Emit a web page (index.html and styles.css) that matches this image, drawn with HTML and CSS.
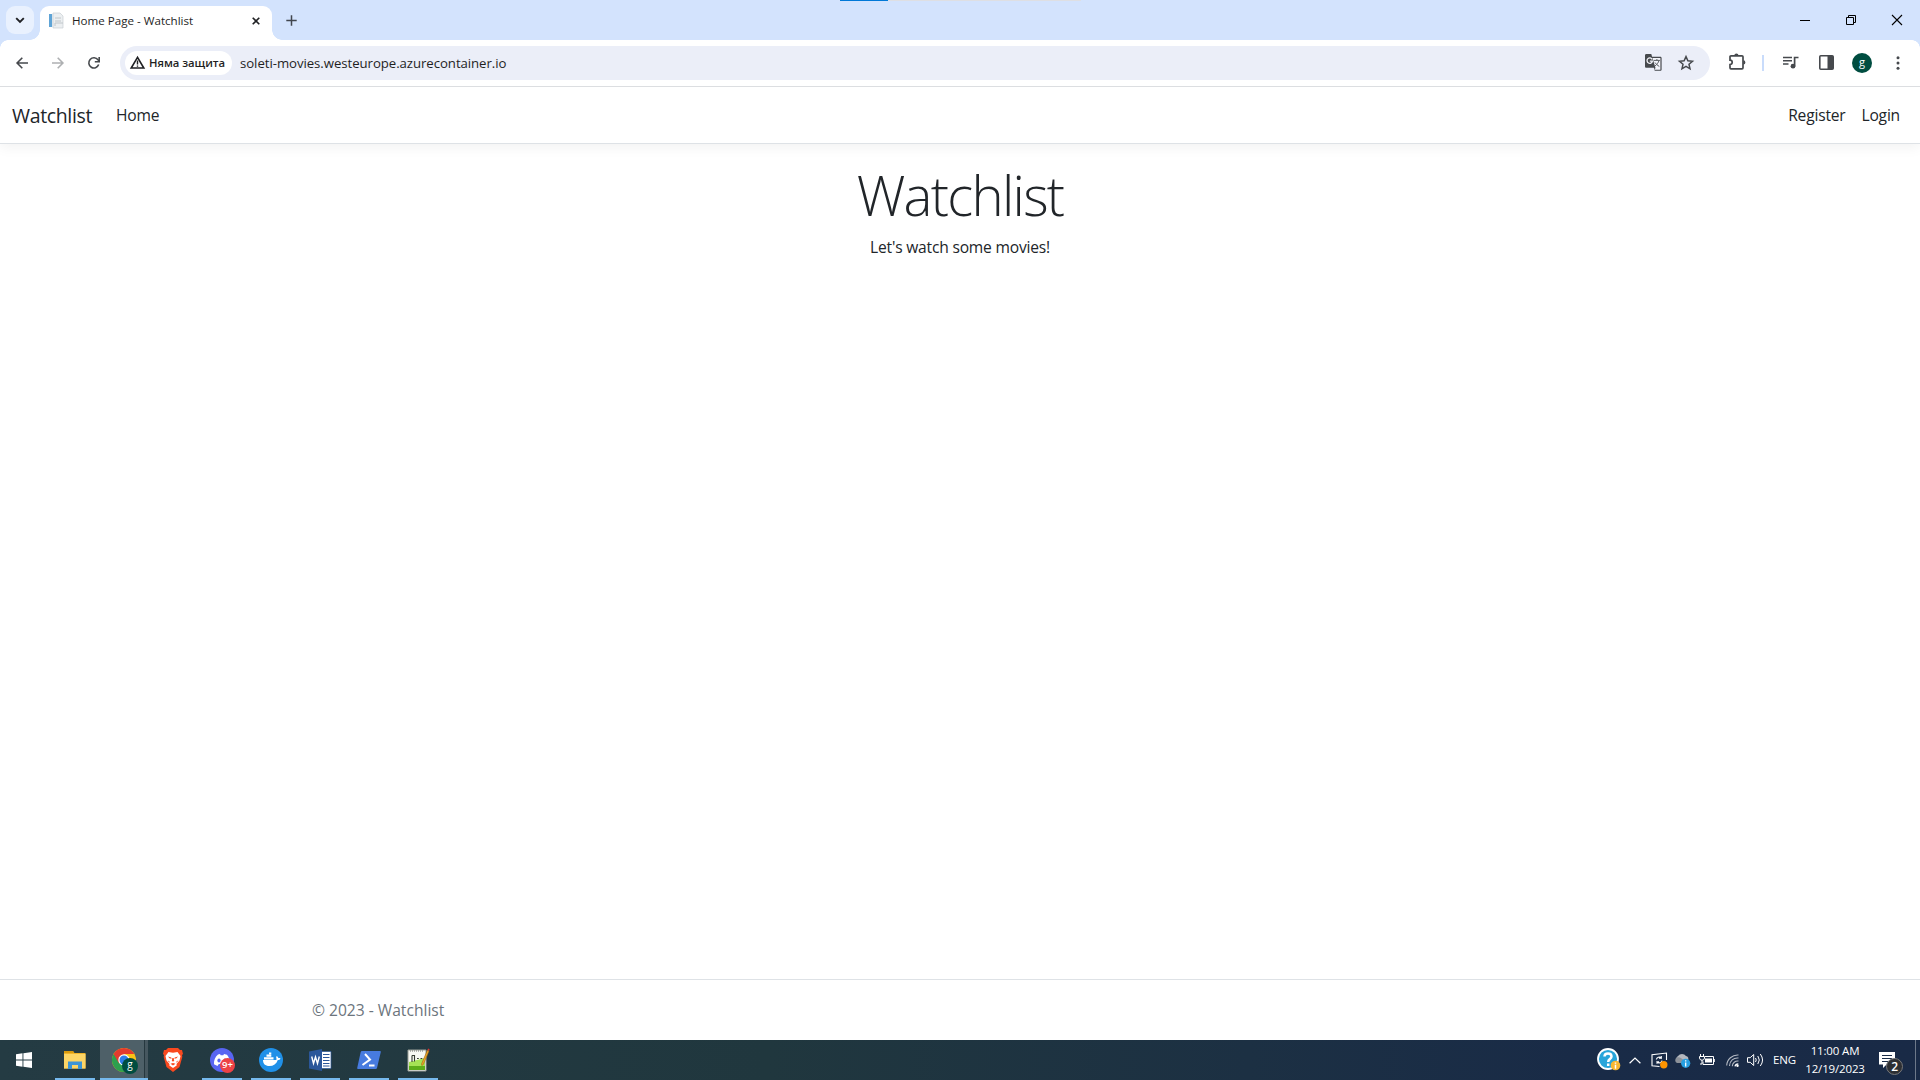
FILE: index.html
```html
<!DOCTYPE html>
<html lang="en">
<head>
<meta charset="utf-8">
<title>Home Page - Watchlist</title>
<link rel="stylesheet" href="styles.css">
</head>
<body>
<div class="desktop">
  <div class="loader"><span></span></div>
  <header class="tabstrip">
    <button class="tab-search"><svg width="10" height="7" viewBox="0 0 10 7"><path d="M1.2 1.2 5 5l3.8-3.8" fill="none" stroke="#202124" stroke-width="1.9"/></svg></button>
    <div class="tab">
      <svg class="favicon" width="16" height="16" viewBox="0 0 16 16"><path d="M1 1h10v13H1z" fill="#e8eef3"/><path d="M1 1h3v13H1z" fill="#5fa4d6"/><path d="M5 0h7l3 3v12H5z" fill="#eceff1" stroke="#c8ced3" stroke-width=".7"/><path d="M7 5h6M7 8h6M7 13v-3h8" fill="none" stroke="#c0c6ca"/></svg>
      <span class="tab-title">Home Page - Watchlist</span>
      <svg width="8" height="8" viewBox="0 0 8 8"><path d="m.7.7 6.6 6.6m0-6.6L.7 7.3" stroke="#202124" stroke-width="1.6"/></svg>
    </div>
    <svg class="new-tab" width="11" height="11" viewBox="0 0 11 11"><path d="M5.500.3v10.400M.3 5.500h10.400" stroke="#41464e" stroke-width="1.500"/></svg>
    <div class="window-controls">
      <svg width="10" height="10" viewBox="0 0 10 10"><path d="M0 5.500h10" stroke="#000"/></svg>
      <svg width="10" height="10" viewBox="0 0 10 10"><path d="M.5 2.500h7v7h-7zM2.500 2.500v-2h7v7h-2" fill="none" stroke="#000"/></svg>
      <svg width="10" height="10" viewBox="0 0 10 10"><path d="m0 0 10 10M10 0 0 10" stroke="#000" stroke-width="1.100"/></svg>
    </div>
  </header>
  <div class="toolbar">
    <div class="nav-buttons">
      <svg width="12" height="12" viewBox="0 0 12 12"><path d="M12 6H1.400M6.300.8 1.100 6l5.200 5.200" fill="none" stroke="#46494d" stroke-width="1.600"/></svg>
      <svg width="12" height="12" viewBox="0 0 12 12"><path d="M0 6h10.600M5.700.8 10.900 6l-5.200 5.200" fill="none" stroke="#aeb0b2" stroke-width="1.600"/></svg>
      <svg width="12" height="12" viewBox="0 0 12 12"><path d="M10.700 7.600A5.100 5.100 0 1 1 10 2.800L11 4" fill="none" stroke="#46494d" stroke-width="1.600"/><path d="M11.200 0v4.700H6.800" fill="none" stroke="#46494d" stroke-width="1.600"/></svg>
    </div>
    <div class="omnibox">
      <div class="security">
        <svg width="15" height="13" viewBox="0 0 15 13"><path d="M7.500 1.400 1.200 12h12.600z" fill="none" stroke="#202124" stroke-width="1.600"/><path d="M7.500 4.500v4M7.500 9.400v1.300" stroke="#202124" stroke-width="1.400"/></svg>
        <span>Няма защита</span>
      </div>
      <span class="url">soleti-movies.westeurope.azurecontainer.io</span>
      <svg class="translate" width="17" height="17" viewBox="0 0 17 17"><path d="M1.300 0h5l.8 2.700h8.200c.8 0 1.300.6 1.300 1.300v11.500c0 .8-.5 1.300-1.300 1.300H9.700L9 13.700H1.300C.6 13.700 0 13 0 12.400V1.300C0 .6.600 0 1.300 0z" fill="#46494d"/><path d="m7.500 4 3 10-1.100 1.700h6V4z" fill="#f4f5fb"/><path d="M7.200 5.500A2.700 2.700 0 1 0 7.400 7.100H4.800" fill="none" stroke="#f4f5fb" stroke-width="1.300"/><path d="M8.700 6.400h6.200M11.900 5v1.400M14 6.500c-.7 2.300-2 4-4 5.500M10 8.500c1 1.500 2.500 3 4.300 4" fill="none" stroke="#5b5e62" stroke-width="1"/></svg>
      <svg class="star" width="16" height="15" viewBox="0 0 16 15"><path d="m8 1.600 1.900 4.200 4.600.5L11 9.300l1 4.500-4-2.400-4 2.400 1-4.500-3.500-3 4.600-.5z" fill="none" stroke="#46494d" stroke-width="1.500"/></svg>
    </div>
    <div class="toolbar-actions">
      <svg class="extensions" width="17" height="17" viewBox="0 0 17 17"><path d="M2 2.800h11c.6 0 1 .4 1 1v11c0 .6-.4 1-1 1H2c-.6 0-1-.4-1-1v-3.300a2.200 2.200 0 0 0 0-4.400V3.800c0-.6.4-1 1-1z" fill="none" stroke="#46494d" stroke-width="1.700"/><path d="M5.300 2.500a2.100 2.100 0 0 1 4.200 0zM14.300 7.300a2.100 2.100 0 0 1 0 4.200z" fill="#46494d"/></svg>
      <i class="divider"></i>
      <svg class="media" width="16" height="13" viewBox="0 0 16 13"><path d="M0 1.500h9M0 4.800h9M0 8h5.500" stroke="#46494d" stroke-width="1.600"/><path d="M11.600 10V1.500h3.900" fill="none" stroke="#46494d" stroke-width="1.700"/><circle cx="10" cy="10.200" r="2.400" fill="#46494d"/></svg>
      <svg class="sidepanel" width="15" height="15" viewBox="0 0 15 15"><rect x=".8" y=".8" width="13.400" height="13.400" rx="1" fill="none" stroke="#46494d" stroke-width="1.600"/><path d="M8.500 1H14v13H8.500z" fill="#46494d"/></svg>
      <span class="profile">g</span>
      <svg class="menu" width="4" height="14" viewBox="0 0 4 14"><g fill="#46494d"><circle cx="2" cy="1.700" r="1.500"/><circle cx="2" cy="7" r="1.500"/><circle cx="2" cy="12.300" r="1.500"/></g></svg>
    </div>
  </div>

  <div class="page">
    <nav class="navbar">
      <a class="brand">Watchlist</a><a class="home">Home</a>
      <a class="register">Register</a><a class="login">Login</a>
    </nav>
    <main class="content">
      <h1>Watchlist</h1>
      <p>Let's watch some movies!</p>
    </main>
    <footer class="footer"><div class="container">© 2023 - Watchlist</div></footer>
  </div>

  <div class="taskbar">
    <div class="start"><svg width="16" height="16" viewBox="0 0 16 16"><path d="M0 2.300 6.500 1.300v6.200H0zM7.400 1.200 16 0v7.500H7.400zM0 8.500h6.500v6.200L0 13.700zM7.400 8.500H16V16l-8.600-1.200z" fill="#fff"/></svg></div>
    <div class="apps">
      <div class="app running"><svg width="22" height="18" viewBox="0 0 22 18"><path d="M0 0h9l1.500 2H21.500v15.500H0z" fill="#f0b429"/><path d="M0 3h21.500v14.500H0z" fill="#fcd566"/><path d="M0 0h9l1 2H0z" fill="#d99a0e"/><path d="M4 18v-7.500h14V18h-4v-4H8v4z" fill="#3c94d6"/></svg></div>
      <div class="app running active"><svg width="25" height="25" viewBox="0 0 25 25"><circle cx="12" cy="12" r="12" fill="#fbc116"/><path d="M12 12 1.600 6A12 12 0 0 0 12 24l5.200-9z" fill="#2da04e"/><path d="M12 6h10.400A12 12 0 0 0 1.600 6l5.200 9z" fill="#e33b2e"/><circle cx="12" cy="12" r="5.700" fill="#fff"/><circle cx="12" cy="12" r="4.500" fill="#2f7de9"/></svg><span class="badge-profile">g</span><i class="stack"></i></div>
      <div class="app"><svg width="20" height="24" viewBox="0 0 20 24"><path d="m5 0 10 0 2 2h2l1 4-1 1 .3 2-2.800 10L10 24l-6.500-5L.7 9 1 7 0 6l1-4h2z" fill="#f9491f"/><path d="m5.500 4 4.500.8 4.500-.8 3 4-1 4.500-3 3.500.2 1.500L10 20l-3.700-2.500.2-1.500-3-3.500-1-4.500z" fill="#fff"/><path d="m5 8.500 3.300.9.300 1.300-2.100-.4zM15 8.500l-3.300.9-.3 1.300 2.100-.4zM10 13.500l-1.200-.5.500-3h1.400l.5 3zM7.500 15.800l2.500-.9 2.500.9-2.500 1.600zM4.500 12.300l2.300 1.500-.6.900zM15.500 12.300l-2.300 1.500.6.900z" fill="#f9491f"/></svg></div>
      <div class="app running"><svg width="24" height="24" viewBox="0 0 24 24"><circle cx="12" cy="12" r="12" fill="#5865f2"/><path d="M8 6.500 10 6l.7 1.300h2.600L14 6l3 .7c2 2.500 3.300 6 3 9.600L16.500 18l-1.300-2H8.800l-1.300 2L4 16.300C3.700 12.500 5 9 8 6.500z" fill="#fff"/><ellipse cx="9" cy="12.500" rx="1.600" ry="1.900" fill="#5865f2"/><ellipse cx="15" cy="12.500" rx="1.600" ry="1.900" fill="#5865f2"/></svg><span class="badge-count">9+</span></div>
      <div class="app running"><svg width="24" height="24" viewBox="0 0 24 24"><circle cx="12" cy="12" r="12" fill="#2090e8"/><path d="M4 12h13c.5-.2.700-.700.600-1.200-.6-1-.5-2 .1-2.900 1 .6 1.500 1.300 1.600 2.200.8-.1 1.500 0 2.200.4-.5 1-1.300 1.500-2.700 1.500C17.300 16 14.500 18 10.500 18 6 18 4 15.700 4 12z" fill="#fff"/><path d="M5 11.500V9.200h9.500v2.300zM7.500 8.800V6.600h4.800v2.200zM10 6.300V4.500h2.300v1.800z" fill="#fff"/></svg></div>
      <div class="app running"><svg width="22" height="22" viewBox="0 0 22 22"><path d="M12 2.500h10v17H12z" fill="#fff" stroke="#2b579a" stroke-width=".7"/><path d="M14 5.500h6.500M14 8.500h6.500M14 11.500h6.500M14 14.500h6.500M14 17h6.500" stroke="#2b579a"/><path d="m0 2.500 13-2.500v22L0 19.500z" fill="#2b579a"/><path d="m2.700 7.500 1.800 7L6.500 8l2 6.500 1.800-7" fill="none" stroke="#fff" stroke-width="1.400"/></svg></div>
      <div class="app running"><svg width="24" height="18" viewBox="0 0 24 18"><path d="M5 0h18q1 0 .8 1L20 17q-.2 1-1.300 1H1Q0 18 .200 17L3.700 1Q4 0 5 0z" fill="#477bdf"/><path d="m8 3 5 5.500L5.500 14M12 14.500h5.500" fill="none" stroke="#fff" stroke-width="2"/></svg></div>
      <div class="app running"><svg width="23" height="24" viewBox="0 0 23 24"><path d="M1 2h18v21H1z" fill="#f7f8f3" stroke="#9ba098"/><path d="M2 14 18 10v12H2z" fill="#a6e254"/><path d="M2 18h16v4H2z" fill="#5dac19"/><path d="M5 7.500h2.500v6M5 7.500v6.500M10 10.500h1.800M13.500 10.500h1.800" fill="none" stroke="#353b32" stroke-width="1.100"/><path d="m20.500 2-6 14 .3 1.500 1.500-1L22 3z" fill="#eea728" stroke="#9d6414" stroke-width=".6"/><path d="m20.500 2 .7-1.500 1.400.7L22 3z" fill="#dd3232"/><path d="M3 3h14" stroke="#777" stroke-dasharray="1 1"/></svg></div>
    </div>
    <div class="tray">
      <svg class="help" width="24" height="24" viewBox="0 0 24 24"><circle cx="11" cy="11" r="10" fill="#28a5da" stroke="#fff" stroke-width="1.800"/><path d="M7.500 8.500c0-4 7-4 7 0 0 2.600-3.300 2.600-3.300 5.500M11.200 15.500V18" fill="none" stroke="#fff" stroke-width="2.500"/><circle cx="18.500" cy="17.500" r="4.800" fill="#f7b731"/><path d="M18.500 14.500v1.200M18.500 16.700v4" stroke="#fff" stroke-width="1.500"/></svg>
      <svg class="chevron" width="12" height="7" viewBox="0 0 12 7"><path d="m.6 6.300 5.400-5.300 5.400 5.300" fill="none" stroke="#fff" stroke-width="1.200"/></svg>
      <svg class="update" width="17" height="17" viewBox="0 0 17 17"><path d="M8.500 14.500 1 13.800V2.700L15.500 1v7" fill="none" stroke="#fff" stroke-width="1.100"/><path d="M5.300 7.500A3 3 0 0 1 10.300 6V4M10.500 6.300H8M11 8.500A3 3 0 0 1 6 10v1.700M5.800 9.700H8" fill="none" stroke="#fff" stroke-width="1.100"/><circle cx="12.800" cy="12.700" r="3.700" fill="#ff9500"/></svg>
      <svg class="cloud" width="17" height="15" viewBox="0 0 17 15"><path d="M3 9A4 4 0 0 1 4 3a5 5 0 0 1 8 0c2 .5 3 2 2 5l-5 2z" fill="#b4b8bf"/><path d="M3 10a3 3 0 0 1 0-5.500c3-1 4 1 6 2V10z" fill="#8c9199"/><circle cx="11.700" cy="10.300" r="4.600" fill="#279ee0"/><path d="M11.700 7.300v1.200M11.700 9.500v4" stroke="#fff" stroke-width="1.300"/></svg>
      <svg class="battery" width="16" height="12" viewBox="0 0 16 12"><path d="M6 2.500h8.500v8H4V7.500M15.300 5v3" fill="none" stroke="#fff"/><path d="M6 4.500h7v4H6z" fill="#fff"/><path d="M1.500 0v2M4.500 0v2M.5 2.500h5v1.500q0 2-2.500 2.300Q.5 6 .5 4zM3 6v4H1" fill="none" stroke="#fff"/></svg>
      <svg class="wifi" width="13" height="13" viewBox="0 0 13 13"><g fill="none" stroke="#b4bac4" stroke-width="1.100"><path d="M.7 11.500A11 11 0 0 1 12.500 1M3.500 12A8 8 0 0 1 12.500 4M6.300 12.300A5.500 5.500 0 0 1 12.500 7"/></g><path d="M9 12.300Q9.500 10 12.300 9.800" fill="none" stroke="#fff" stroke-width="1.300"/><circle cx="11.500" cy="11.700" r="1.200" fill="#fff"/></svg>
      <svg class="sound" width="17" height="14" viewBox="0 0 17 14"><path d="M.5 4.700h2.700l3.500-3.200v11L3.200 9.300H.5z" fill="none" stroke="#fff"/><path d="M8.500 5q1.500 2 0 4M10.800 3q3 4 0 8M13.300 1q4.500 6 0 12" fill="none" stroke="#fff"/></svg>
      <span class="lang">ENG</span>
      <div class="clock"><span>11:00 AM</span><span class="date">12/19/2023</span></div>
      <div class="notifications"><svg width="16" height="16" viewBox="0 0 16 16"><path d="M0 0h16v12.500h-8.500L4 16v-3.500H0z" fill="#fff"/><path d="M3 3.500h10M3 6.500h10M3 9.500h6" stroke="#1a2c48"/></svg><span>2</span></div>
      <i class="show-desktop"></i>
    </div>
  </div>
</div>
</body>
</html>
```
FILE: styles.css
```css
* { box-sizing: border-box; }
body { margin: 0; font-family: "Open Sans", "Noto Sans", sans-serif; color: #212529; background: #fff; overflow: hidden; }
svg { display: block; flex: none; overflow: visible; }
.desktop { display: flex; flex-direction: column; width: 1920px; height: 1080px; position: relative; }
.loader { position: absolute; left: 840px; top: 0; width: 241px; height: 1px; background: #dedfe3; }
.loader span { display: block; width: 48px; height: 1px; background: #0078d7; }

.tabstrip { height: 40px; flex: none; display: flex; align-items: flex-start; padding: 6px 17px 0 6px; background: #d3e3fd; }
.tab-search { width: 28px; height: 28px; padding: 0; border: 0; border-radius: 9px; background: #e9f1fe; display: flex; align-items: center; justify-content: center; }
.tab { position: relative; width: 232px; height: 34px; margin-left: 6px; padding: 0 12px 4px 8px; display: flex; align-items: center; background: #fff; border-radius: 9px 9px 0 0; }
.tab::before, .tab::after { content: ""; position: absolute; bottom: 0; width: 10px; height: 10px; }
.tab::before { left: -10px; background: radial-gradient(circle at 0 0, transparent 9.5px, #fff 10px); }
.tab::after { right: -10px; background: radial-gradient(circle at 100% 0, transparent 9.5px, #fff 10px); }
.tab-title { flex: 1; margin-left: 8px; padding-bottom: 1px; font-size: 11.6px; color: #1f1f1f; }
.new-tab { margin: 9px 0 0 14px; }
.window-controls { display: flex; gap: 36px; margin: 9px 0 0 auto; padding-right: 1px; }

.toolbar { height: 47px; flex: none; display: flex; align-items: center; padding: 0 20px 1px 16px; background: #fff; border-bottom: 1px solid #dcdee1; position: relative; }
.toolbar::before, .toolbar::after { content: ""; position: absolute; top: 0; width: 8px; height: 8px; }
.toolbar::before { left: 0; background: radial-gradient(circle at 100% 100%, transparent 7.5px, #d3e3fd 8px); }
.toolbar::after { right: 0; background: radial-gradient(circle at 0 100%, transparent 7.5px, #d3e3fd 8px); }
.nav-buttons { display: flex; gap: 24px; }
.omnibox { width: 1590px; height: 34px; margin-left: 20px; padding: 0 16px 0 5px; display: flex; align-items: center; border-radius: 17px; background: #ebeef8; }
.security { width: 107px; height: 24px; display: flex; align-items: center; padding-left: 5px; gap: 4px; border-radius: 12px; background: #fff; color: #1f1f1f; font-size: 11.3px; font-weight: 600; letter-spacing: -.03px; white-space: nowrap; }
.url { flex: 1; margin-left: 8px; font-size: 13.2px; letter-spacing: -.05px; color: #1f1f1f; }
.translate { margin-right: 16px; }
.toolbar-actions { flex: 1; display: flex; align-items: center; }
.extensions { margin: 0 0 2px 19px; }
.divider { width: 2px; height: 16px; margin-left: 16px; background: #c9dcfb; }
.media { margin-left: 19px; }
.sidepanel { margin-left: 20px; }
.profile { width: 20px; height: 20px; margin-left: 18px; border-radius: 50%; background: #004d40; color: #fff; text-align: center; font-size: 11px; line-height: 17px; }
.menu { margin-left: auto; }

.page { flex: 1; display: flex; flex-direction: column; background: #fff; }
.navbar { height: 57px; display: flex; align-items: center; padding: 0 20px 0 12px; font-size: 15.6px; letter-spacing: -.2px; border-bottom: 1px solid #dee2e6; box-shadow: 0 4px 12px rgba(0,0,0,.05); }
.brand { font-size: 19.5px; letter-spacing: -.35px; }
.home { margin-left: 24px; }
.register { margin-left: auto; }
.login { margin-left: 16px; }
.content { flex: 1; text-align: center; padding-top: 18px; }
h1 { margin: 0 0 6px; font-size: 54.500px; line-height: 67px; font-weight: 300; letter-spacing: -1.7px; }
p { margin: 0; font-size: 15.6px; letter-spacing: -.2px; line-height: 24px; }
.footer { height: 61px; border-top: 1px solid #dee2e6; color: #6c757d; font-size: 15.6px; line-height: 61px; }
.container { width: 1320px; margin: 0 auto; padding: 0 12px; }

.taskbar { height: 40px; flex: none; display: flex; background: linear-gradient(90deg, #243b43 0, #20373e 40%, #1c3043 65%, #192b47 82%, #192a46 100%); color: #fff; }
.start { width: 51px; display: flex; align-items: center; padding-left: 16px; }
.apps { display: flex; gap: 1px; }
.app { position: relative; width: 48px; display: flex; align-items: center; justify-content: center; }
.running::after { content: ""; position: absolute; left: 4px; right: 4px; bottom: 0; height: 2px; background: #76b9ed; }
.active { background: #4e6068; }
.active::after { left: 0; right: 0; }
.stack { position: absolute; left: 44px; top: 0; width: 4px; height: 38px; background: #46575f; border-left: 1px solid #26383f; }
.badge-profile, .badge-count { position: absolute; border-radius: 50%; text-align: center; color: #fff; }
.badge-profile { left: 22px; top: 18px; width: 16px; height: 16px; background: #004d40; font-size: 10px; line-height: 13px; }
.badge-count { left: 22px; top: 18px; width: 15px; height: 15px; background: #ed4245; font-size: 9.5px; font-weight: 600; line-height: 14px; }
.tray { margin-left: auto; display: flex; align-items: center; font-size: 11.5px; letter-spacing: -.15px; }
.chevron { margin-left: 8px; }
.update { margin-left: 10px; }
.cloud { margin-left: 6px; }
.battery { margin-left: 8px; }
.wifi { margin-left: 11px; }
.sound { margin-left: 8px; }
.lang { margin-left: 9px; padding-bottom: 1px; }
.clock { width: 60px; margin-left: 9px; display: flex; flex-direction: column; align-items: center; line-height: 18px; padding-bottom: 1px; }
.notifications { position: relative; margin-left: 14px; }
.notifications span { position: absolute; left: 7px; top: 6px; width: 17px; height: 17px; border: 1px solid #77787a; border-radius: 50%; background: #2d2f33; text-align: center; font-size: 12px; font-weight: 600; line-height: 15px; }
.show-desktop { width: 5px; height: 40px; margin-left: 20px; border-left: 1px solid #6d7889; }
```
